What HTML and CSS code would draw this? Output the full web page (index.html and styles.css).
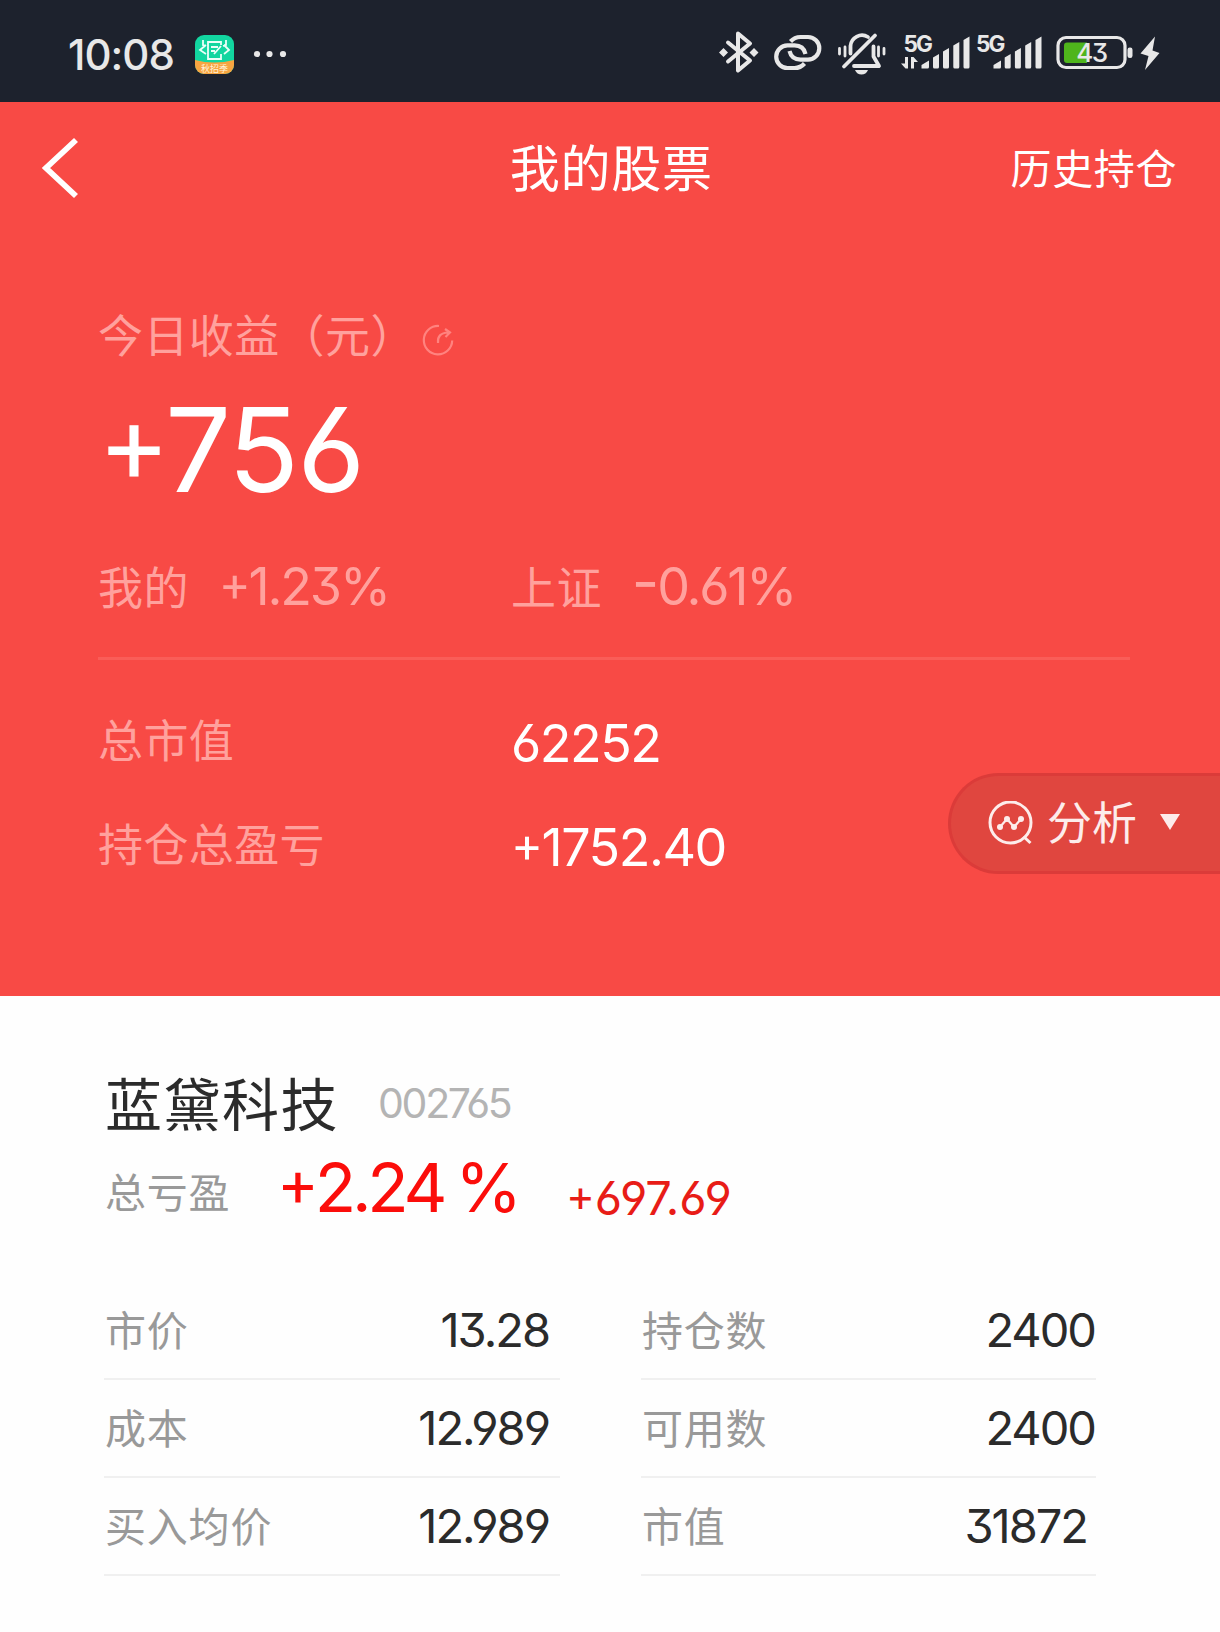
FILE: index.html
```html
<!DOCTYPE html>
<html lang="zh-CN">
  <head>
    <meta charset="UTF-8" />
    <meta name="viewport" content="width=device-width, initial-scale=1.0" />
    <title>我的股票</title>
    <link rel="stylesheet" href="styles.css">
  </head>
  <body>
    <div class="status">
      <span class="time">10:08</span>
      <svg class="app" width="39" height="39" viewBox="0 0 39 39">
        <defs>
          <clipPath id="appClip"><rect width="39" height="39" rx="9" /></clipPath>
        </defs>
        <g clip-path="url(#appClip)">
          <rect width="39" height="39" fill="#12d6a0" />
          <path d="M0 25Q19 30 39 25V39H0Z" fill="#f7a541" />
        </g>
        <g fill="none" stroke="#eafff8" stroke-width="1.8">
          <path d="M26 10V7H13v17h13v-5M16 12h7M16 16h4M19 19l7-8" />
          <path d="M11 10l-6 5 6 4M29 10l5 5-5 4M8 5v5l3 1M31 5v5l-3 1" />
        </g>
        <text x="19.5" y="37" class="app-text">秋招季</text>
      </svg>
      <svg class="more" width="34" height="8" viewBox="0 0 34 8">
        <circle cx="4" cy="4" r="3.1" />
        <circle cx="16.5" cy="4" r="3.1" />
        <circle cx="30" cy="4" r="3.1" />
      </svg>
      <!-- system icons -->
      <svg class="system" width="450" height="50" viewBox="715 28 450 50">
        <path d="M728 43.500L750 61.500L738 71.500V34.500L750 44.500L728 62.500" fill="none" stroke="#e8e8e8" stroke-width="4" stroke-linejoin="round" stroke-linecap="round" />
        <path d="M723.500 49l4.500 4.500-4.500 4.500-4.500-4.500ZM754 49l4.500 4.500-4.500 4.500-4.500-4.500Z" fill="#e8e8e8" />
        <g fill="none" stroke="#e8e8e8" stroke-width="4.200">
          <path d="M790.500 42.500q4-4.500 10-4.500h7.500a11.300 11.300 0 0 1 0 22.600h-7.500q-9 0-11-8.500" />
          <path d="M804.500 64.500q-4 4.500-10 4.500h-7a11.300 11.300 0 0 1 0-22.600h7q9 0 11 8.500" />
        </g>
        <g fill="none" stroke="#e8e8e8" stroke-width="3.800" stroke-linecap="round" stroke-linejoin="round">
          <path d="M844 67.500L875 36.500" />
          <path d="M850.500 54.500V47a11.500 11.500 0 0 1 17.500-9" />
          <path d="M873.500 47.500V57.500l5.500 9.500H854" />
          <path d="M839.500 49.500v5.500M845 48v9M878.500 48v9M884 49.500v5.500" stroke-width="2.800" />
        </g>
        <path d="M855 71h13q-2 4.500-6.500 4.500t-6.500-4.500Z" fill="#e8e8e8" />
        <text x="903.500" y="52.500" class="net">5G</text>
        <text x="976" y="52.500" class="net">5G</text>
        <g fill="#e8e8e8">
          <path d="M908 58v11.500h-2.500L901 64.500h4V58ZM911 69.500V58h2.500l4.500 5h-4v6.500Z" />
          <path d="M921.500 66l7.500-4.500V68q0 1.500-1.500 1.500h-6ZM933 58.500l6-3.500V68q0 1.500-1.500 1.500H934.500q-1.500 0-1.500-1.500ZM943 52.500l6-3.500V68q0 1.500-1.500 1.500H944.500q-1.500 0-1.500-1.500ZM953.300 46.500l6-3.500V68q0 1.500-1.500 1.500H954.800q-1.500 0-1.500-1.500ZM963.500 41l6-3.500V68q0 1.500-1.500 1.500H965q-1.500 0-1.500-1.500Z" />
          <path d="M993.500 66l7.500-4.500V68q0 1.500-1.500 1.500h-6ZM1004.700 58.500l6-3.500V68q0 1.500-1.500 1.500H1006.200q-1.500 0-1.500-1.500ZM1014.900 52.500l6-3.500V68q0 1.500-1.500 1.500H1016.400q-1.500 0-1.500-1.500ZM1025.200 46.500l6-3.500V68q0 1.500-1.500 1.500H1026.700q-1.500 0-1.500-1.500ZM1035.500 41l6-3.500V68q0 1.500-1.500 1.500H1037q-1.500 0-1.500-1.500Z" />
        </g>
        <rect x="1058" y="38.500" width="67" height="30" rx="8" fill="none" stroke="#e8e8e8" stroke-width="3.200" />
        <path d="M1087 43.500V64H1067q-3 0-3-3V46.500q0-3 3-3Z" fill="#4fb51c" />
        <rect x="1127.500" y="48.500" width="5" height="10.500" rx="2.300" fill="#e8e8e8" />
        <text x="1091.500" y="63" class="battery">43</text>
        <path d="M1155 37.500L1140.500 54.500L1148.500 57L1145 71L1159.500 54L1152.500 51.500Z" fill="#e8e8e8" />
      </svg>
    </div>

    <div class="hero">
      <div class="nav">
        <svg class="back" width="40" height="62" viewBox="0 0 40 62">
          <path d="M35 3L5 31L35 59" fill="none" stroke="#fff" stroke-width="5.800" />
        </svg>
        <h1>我的股票</h1>
        <span class="history">历史持仓</span>
      </div>

      <div class="today">
        <span class="label">今日收益（元）</span>
        <svg width="32" height="32" viewBox="0 0 32 32" fill="none" stroke="#ff837f" stroke-width="2.200">
          <path d="M17 2A14.200 14.200 0 1 0 30.200 16.500" />
          <path d="M16 19Q15 9 26 8.500M23 5l5 3.500-4.500 4.500" />
        </svg>
      </div>
      <p class="profit"><span class="sign">+</span>756</p>
      <div class="rates">
        <p><span class="label">我的</span><span class="rate"><span class="sign">+</span>1.23%</span></p>
        <p><span class="label">上证</span><span class="rate"><span class="sign minus">-</span>0.61%</span></p>
      </div>

      <div class="totals">
        <p><span class="label">总市值</span><span class="amount">62252</span></p>
        <p><span class="label">持仓总盈亏</span><span class="amount"><span class="sign">+</span>1752.40</span></p>
      </div>

      <div class="analysis">
        <svg width="46" height="46" viewBox="0 0 46 46" fill="none" stroke="#fdeceb" stroke-width="3">
          <circle cx="22.500" cy="21.500" r="20.500" />
          <path d="M35.500 35.500l7 6.500" />
          <path d="M12 26l7-8 7 8 7-8" stroke-width="2.200" />
          <g fill="#fdeceb" stroke="none">
            <circle cx="12" cy="26" r="3" />
            <circle cx="19" cy="18" r="3" />
            <circle cx="26" cy="26" r="3" />
            <circle cx="33" cy="18" r="3" />
          </g>
        </svg>
        <span>分析</span>
        <i class="arrow"></i>
      </div>
    </div>

    <div class="stock">
      <div class="name">
        <h2>蓝黛科技</h2>
        <span class="code">002765</span>
      </div>
      <div class="gain">
        <span class="title">总亏盈</span>
        <span class="percent"><span class="sign">+</span>2.24 %</span>
        <span class="money"><span class="sign">+</span>697.69</span>
      </div>
      <ul class="detail">
        <li><span>市价</span><b>13.28</b></li>
        <li><span>持仓数</span><b>2400</b></li>
        <li><span>成本</span><b>12.989</b></li>
        <li><span>可用数</span><b>2400</b></li>
        <li><span>买入均价</span><b>12.989</b></li>
        <li><span>市值</span><b class="value">31872</b></li>
      </ul>
    </div>
  </body>
</html>
```
FILE: styles.css
```css
* {
  margin: 0;
  padding: 0;
  box-sizing: border-box;
}
ul {
  list-style: none;
}
body {
  width: 1220px;
  height: 1632px;
  overflow: hidden;
  background: #fefefe;
  font-family: Inter, "Noto Sans CJK SC", sans-serif;
  font-feature-settings: "cv03", "cv04", "cv09";
  white-space: nowrap;
}
h1,
h2,
b {
  font-weight: 400;
}
.sign {
  font-size: 0.93em;
  line-height: 0;
  vertical-align: 0.09em;
}
.minus {
  font-size: 1.15em;
  vertical-align: 0.03em;
}

/* status bar */
.status {
  display: flex;
  align-items: center;
  height: 102px;
  padding: 6px 55px 0 68px;
  background: #1d222d;
  color: #e8e8e8;
}
.time {
  width: 127px;
  font-size: 42px;
  font-weight: 500;
  letter-spacing: -1px;
}
.app-text {
  font-size: 9px;
  fill: #fff3dc;
  text-anchor: middle;
}
.more {
  margin-left: 19px;
  fill: #e8e8e8;
}
.system {
  margin-left: auto;
  margin-top: -4px;
}
.net {
  font-size: 22.5px;
  font-weight: 700;
  fill: #e8e8e8;
  letter-spacing: -1.8px;
}
.battery {
  font-size: 26px;
  font-weight: 500;
  fill: #e8e8e8;
  text-anchor: middle;
  letter-spacing: -1.5px;
}

/* red summary */
.hero {
  position: relative;
  height: 894px;
  padding-left: 98px;
  background: #f84a45;
  color: #fff;
}
.nav {
  display: flex;
  align-items: center;
  justify-content: space-between;
  height: 132px;
  margin-left: -98px;
  padding: 0 43px 0 41px;
}
.nav h1 {
  margin-left: 131px;
  padding-top: 2px;
  font-size: 50px;
  line-height: 60px;
  letter-spacing: 0.8px;
}
.history {
  padding-top: 2px;
  font-size: 41px;
  line-height: 60px;
  letter-spacing: 0.6px;
}
.label {
  padding-top: 2px;
  color: #ffa19d;
  font-size: 45px;
  line-height: 60px;
  letter-spacing: 0.4px;
}
.today {
  display: flex;
  align-items: center;
  height: 60px;
  margin-top: 72px;
}
.today svg {
  margin: 8px 0 0 6px;
}
.profit {
  margin: 25px 0 49px;
  font-size: 117px;
  line-height: 117px;
  letter-spacing: -2px;
}
.profit .sign {
  letter-spacing: -5px;
}
.rates,
.totals p {
  display: grid;
  grid-template-columns: 413px 1fr;
  height: 60px;
}
.rates p {
  display: flex;
}
.rate {
  margin-left: 30px;
  color: #ffa19d;
  font-size: 52px;
  line-height: 60px;
  letter-spacing: -2.2px;
}
.totals {
  width: 1032px;
  margin-top: 40px;
  padding-top: 51px;
  border-top: 3px solid #fa5d58;
}
.totals p + p {
  margin-top: 44px;
}
.totals .label {
  padding-top: 1px;
}
.amount {
  padding-top: 3px;
  font-size: 52px;
  line-height: 60px;
  letter-spacing: -1.5px;
}
.analysis {
  position: absolute;
  top: 671px;
  right: 0;
  display: flex;
  align-items: center;
  width: 272px;
  height: 101px;
  padding-left: 37px;
  border: 3px solid #db3b39;
  border-right: 0;
  border-radius: 51px 0 0 51px;
  background: #e0463f;
  color: #fdeceb;
  font-size: 45px;
  line-height: 60px;
}
.analysis span {
  margin-left: 13px;
  padding-top: 1px;
}
.arrow {
  margin: -4px 0 0 23px;
  border: 10px solid transparent;
  border-top: 16px solid #fdeceb;
  border-bottom: 0;
}

/* holding */
.stock {
  padding: 77px 124px 0 104px;
  color: #2b2b2b;
}
.name {
  display: flex;
  align-items: center;
  height: 60px;
}
.name h2 {
  margin-left: 1px;
  padding-top: 5px;
  font-size: 57px;
  line-height: 60px;
  letter-spacing: 1.5px;
}
.code {
  margin-left: 39px;
  color: #b4b4b4;
  font-size: 41px;
  letter-spacing: -2.3px;
}
.gain {
  display: flex;
  align-items: center;
  height: 70px;
  margin-top: 21px;
}
.title {
  width: 173px;
  padding: 7px 0 0 1px;
  color: #999;
  font-size: 41px;
  line-height: 60px;
  letter-spacing: 0.8px;
}
.percent {
  width: 289px;
  margin-top: -4px;
  color: #fb0d0a;
  font-size: 68px;
  line-height: 70px;
  letter-spacing: -4.2px;
  word-spacing: -3px;
}
.money {
  margin-top: 18px;
  color: #e81c17;
  font-size: 47px;
  line-height: 50px;
  letter-spacing: -0.2px;
}
.detail {
  display: grid;
  grid-template-columns: 456px 455px;
  column-gap: 81px;
  margin-top: 58px;
}
.detail li {
  display: flex;
  align-items: center;
  justify-content: space-between;
  height: 98px;
  padding: 0 11px 0 1px;
  border-bottom: 2px solid #f0f0f0;
}
.detail li:nth-child(even) {
  padding-right: 1px;
}
.detail span {
  padding-top: 1px;
  color: #999;
  font-size: 41px;
  line-height: 60px;
  letter-spacing: 0.8px;
}
.detail b {
  font-size: 47px;
  line-height: 60px;
  letter-spacing: -2px;
}
.detail .value {
  margin-right: 8px;
}
```
